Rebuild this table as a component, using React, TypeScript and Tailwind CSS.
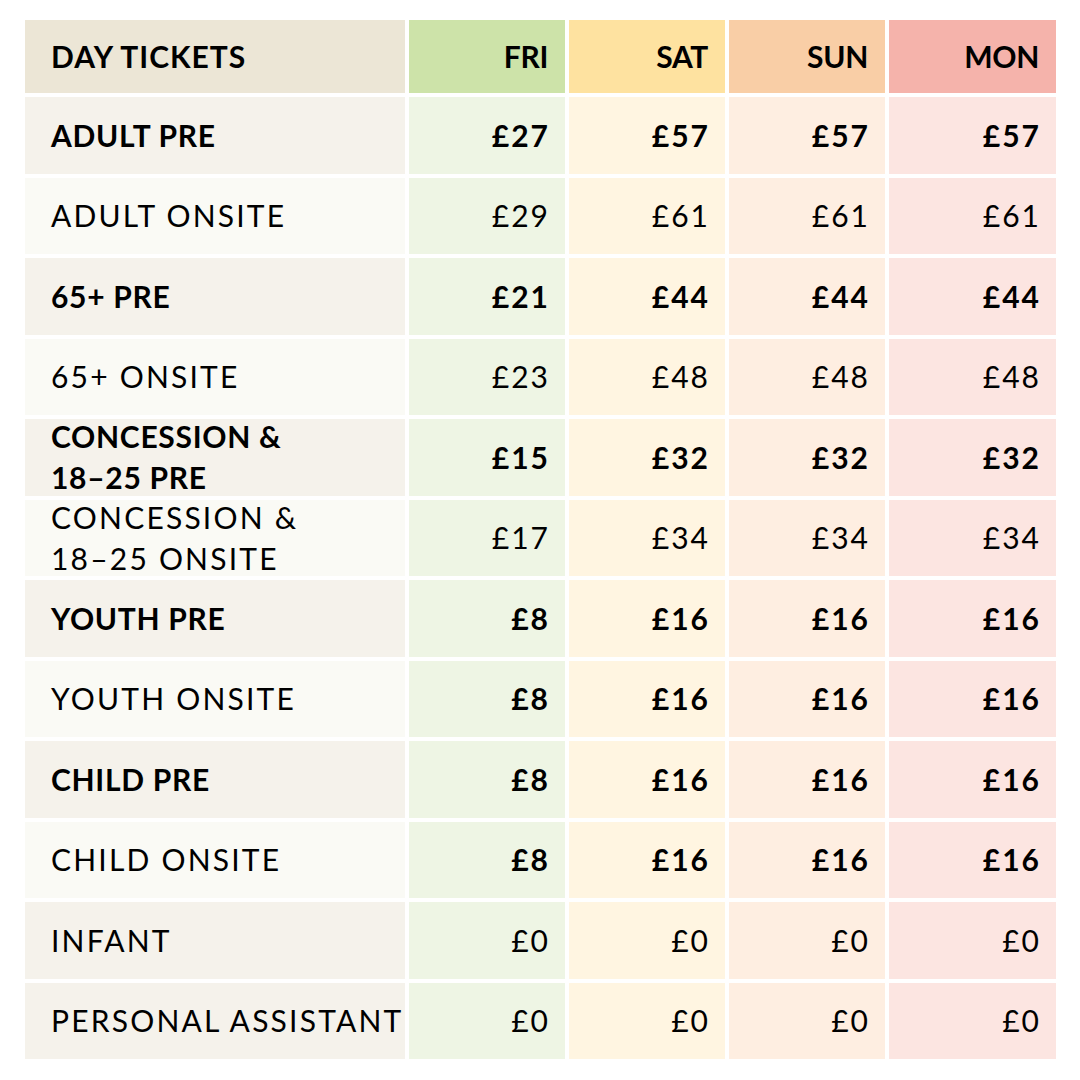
import React from "react";

type Row = { label: React.ReactNode; prices: string[]; boldLabel: boolean; boldPrice: boolean; dark: boolean };

const rows: Row[] = [
  { label: "ADULT PRE", prices: ["£27", "£57", "£57", "£57"], boldLabel: true, boldPrice: true, dark: true },
  { label: "ADULT ONSITE", prices: ["£29", "£61", "£61", "£61"], boldLabel: false, boldPrice: false, dark: false },
  { label: "65+ PRE", prices: ["£21", "£44", "£44", "£44"], boldLabel: true, boldPrice: true, dark: true },
  { label: "65+ ONSITE", prices: ["£23", "£48", "£48", "£48"], boldLabel: false, boldPrice: false, dark: false },
  { label: <>CONCESSION &amp;<br />18–25 PRE</>, prices: ["£15", "£32", "£32", "£32"], boldLabel: true, boldPrice: true, dark: true },
  { label: <>CONCESSION &amp;<br />18–25 ONSITE</>, prices: ["£17", "£34", "£34", "£34"], boldLabel: false, boldPrice: false, dark: false },
  { label: "YOUTH PRE", prices: ["£8", "£16", "£16", "£16"], boldLabel: true, boldPrice: true, dark: true },
  { label: "YOUTH ONSITE", prices: ["£8", "£16", "£16", "£16"], boldLabel: false, boldPrice: true, dark: false },
  { label: "CHILD PRE", prices: ["£8", "£16", "£16", "£16"], boldLabel: true, boldPrice: true, dark: true },
  { label: "CHILD ONSITE", prices: ["£8", "£16", "£16", "£16"], boldLabel: false, boldPrice: true, dark: false },
  { label: "INFANT", prices: ["£0", "£0", "£0", "£0"], boldLabel: false, boldPrice: false, dark: true },
  { label: "PERSONAL ASSISTANT", prices: ["£0", "£0", "£0", "£0"], boldLabel: false, boldPrice: false, dark: true },
];

const bodyBg = ["bg-[#eef5e4]", "bg-[#fff5e1]", "bg-[#feeee1]", "bg-[#fce5e1]"];
const headBg = ["bg-[#cde3a9]", "bg-[#fee2a0]", "bg-[#f9cea6]", "bg-[#f5b3ab]"];
const days = ["FRI", "SAT", "SUN", "MON"];

export default function App() {
  return (
    <div className="w-[1080px] h-[1080px] bg-white pt-[20px] pl-[25px] text-black" style={{ fontFamily: "Lato, 'Open Sans', sans-serif" }}>
      <div className="grid grid-cols-[380px_156px_156px_156px_167px] grid-rows-[73px_repeat(12,76.5px)] gap-[4px] text-[30px] leading-[41px]">
        <div className="bg-[#ece6d6] flex items-center pl-[26px] font-bold tracking-[1px]">DAY TICKETS</div>
        {days.map((d, i) => (
          <div key={d} className={`${headBg[i]} flex items-center justify-end pr-[17px] font-bold tracking-[-0.3px]`}>{d}</div>
        ))}
        {rows.map((r, ri) => (
          <React.Fragment key={ri}>
            <div className={`${r.dark ? "bg-[#f5f2eb]" : "bg-[#fafaf5]"} flex items-center pl-[26px] whitespace-nowrap ${r.boldLabel ? "font-bold tracking-[0.7px]" : "font-normal tracking-[2.2px]"}`}>
              <div>{r.label}</div>
            </div>
            {r.prices.map((p, pi) => (
              <div key={pi} className={`${bodyBg[pi]} flex items-center justify-end pr-[15px] tracking-[2px] ${r.boldPrice ? "font-bold" : "font-normal"}`}>{p}</div>
            ))}
          </React.Fragment>
        ))}
      </div>
    </div>
  );
}
